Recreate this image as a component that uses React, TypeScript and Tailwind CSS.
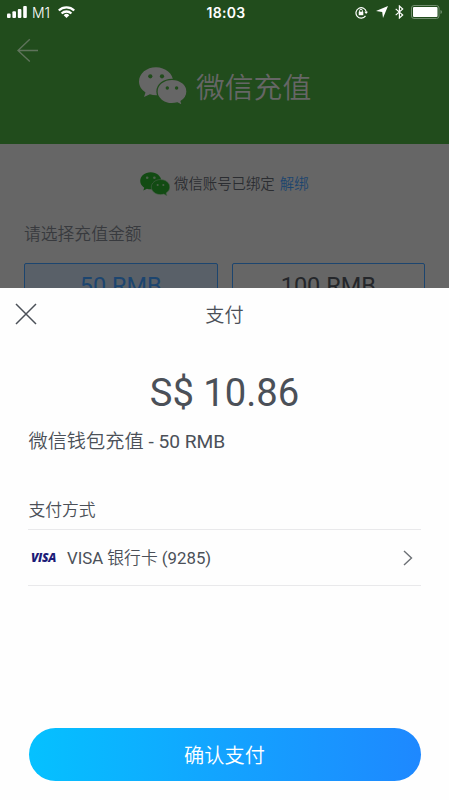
import React from "react";

function WeChatLogo({ className, fill, hole, gap }: { className: string; fill: string; hole: string; gap: number }) {
  return (
    <svg viewBox="0 0 48 39" className={className} fill={fill}>
      <path d="M17 0.3C7.6 0.3 0 6.500 0 14.600c0 4.500 2.500 8.300 6.500 10.900L5 30l5.900-2.700c2 .6 4 .9 6.100 .9 9.500 0 17.200-6 17.200-13.700S26.500 .3 17 .3Z" />
      <path
        d="M33 12.300c-8.300 0-15 5.400-15 12.200s6.700 12.200 15 12.200c1.900 0 3.700-.3 5.400-.8l5 2.600-1.300-4.200c3.600-2.300 5.900-5.800 5.900-9.800 0-6.800-6.700-12.200-15-12.200Z"
        stroke={hole}
        strokeWidth={gap}
      />
      <g fill={hole}>
        <circle cx="11.300" cy="9.300" r="2.100" />
        <circle cx="23" cy="9.300" r="2.100" />
        <circle cx="28.300" cy="21" r="1.700" />
        <circle cx="37.600" cy="21" r="1.700" />
      </g>
    </svg>
  );
}

function StatusBar() {
  return (
    <div className="flex h-6 items-center text-white">
      <svg className="ml-[7px] h-3 w-5" viewBox="0 0 20 12" fill="white">
        <rect x="0" y="7.500" width="3.600" height="4.500" rx="1" />
        <rect x="5.400" y="5.300" width="3.600" height="6.700" rx="1" />
        <rect x="10.800" y="3" width="3.600" height="9" rx="1" />
        <rect x="16.200" y="0" width="3.600" height="12" rx="1" />
      </svg>
      <span className="ml-[5px] w-[20px] pt-px font-[Inter,sans-serif] text-[14px] leading-none font-light tracking-[-0.200px]">M1</span>
      <svg className="ml-[6px] h-3 w-[17px]" viewBox="0 0 17 12" fill="none" stroke="white" strokeWidth="2.300">
        <path d="M.8 4.500a11 11 0 0 1 15.400 0" />
        <path d="M3.600 7.500a7 7 0 0 1 9.800 0" />
        <path d="M8.500 12 5.700 9.200a4 4 0 0 1 5.600 0Z" fill="white" stroke="none" />
      </svg>
      <span className="ml-[128px] w-[46px] pt-px text-center font-[Inter,sans-serif] text-[14px] leading-none font-semibold tracking-[0.300px] whitespace-nowrap">18:03</span>
      <svg className="ml-[106px] h-[13px] w-[13px]" viewBox="0 0 13 13" fill="none" stroke="white" strokeWidth="1.200">
        <path d="M10.500 9.800A5.200 5.200 0 1 1 11.300 6" />
        <path d="M9.300 5.700h3.700l-1.900 2.200Z" fill="white" stroke="none" />
        <rect x="3.700" y="5.700" width="4.600" height="3.500" fill="white" stroke="none" />
        <path d="M4.600 6V4.700a1.400 1.400 0 0 1 2.800 0V6" strokeWidth=".9" />
      </svg>
      <svg className="ml-[8px] h-[12px] w-[12px]" viewBox="0 0 12 12" fill="white">
        <path d="M12 0 7 12 6.200 6 0 5Z" />
      </svg>
      <svg className="ml-[7px] h-[14px] w-[9px]" viewBox="0 0 9 14" fill="none" stroke="white" strokeWidth="1.200">
        <path d="m.7 3.900 7 6.100-3.300 3V1l3.300 3-7 6.100" />
      </svg>
      <svg className="ml-[7px] h-[14px] w-[32px]" viewBox="0 0 32 14" fill="none">
        <rect x=".5" y=".5" width="27.500" height="13" rx="2.500" stroke="#718d6e" />
        <rect x="2" y="2" width="24.500" height="10" rx="1" fill="white" />
        <path d="M29.500 5v4c2-.7 2-3.300 0-4Z" fill="#718d6e" />
      </svg>
    </div>
  );
}

function TopUpPage() {
  return (
    <div className="h-[288px] overflow-hidden bg-[#666]">
      <header className="h-[144px] bg-[#214c1c]">
        <StatusBar />
        <div className="flex h-[43px] pt-[14px] pl-[17px]">
          <svg className="h-6 w-[21px]" viewBox="0 0 21 24" fill="none" stroke="#5f735b" strokeWidth="1.400">
            <path d="M12.800 1.200 1 12.500l11.800 11M1 12.500h20" />
          </svg>
        </div>
        <div className="flex h-[39px] items-center pl-[139px]">
          <WeChatLogo className="h-[39px] w-12 shrink-0" fill="#666" hole="#214c1c" gap={1.3} />
          <h1 className="ml-[9px] pt-[3px] text-[28.800px] leading-[39px] font-[350] whitespace-nowrap text-[#666]">微信充值</h1>
        </div>
      </header>
      <div className="flex h-[79px] items-center pl-[140px] text-[14.400px] font-[350]">
        <WeChatLogo className="h-6 w-[30px] shrink-0" fill="#124b13" hole="#4c604b" gap={1} />
        <span className="ml-[4px] pt-[2px] whitespace-nowrap text-[#2b2d31]">微信账号已绑定</span>
        <a className="ml-[5px] pt-[2px] text-[#1c456f]">解绑</a>
      </div>
      <p className="flex h-[22px] items-center pt-[2px] pl-[24px] text-[16.800px] font-[350] text-[#383a3e]">请选择充值金额</p>
      <div className="mt-[18px] flex gap-[14px] pl-[24px] text-[23.500px] leading-[45px]">
        <div className="h-[60px] w-[193.500px] rounded-[2px] border border-[#1c456f] bg-[#596068] text-center text-[#1c456f]">50 RMB</div>
        <div className="h-[60px] w-[193.500px] rounded-[2px] border border-[#1c456f] text-center text-[#24262a]">100 RMB</div>
      </div>
    </div>
  );
}

function PaymentSheet() {
  return (
    <section className="flex h-[512px] flex-col bg-[#fefefe] text-[#4b5058]">
      <div className="grid h-[52px] grid-cols-3 items-center">
        <svg className="ml-[15px] h-[22px] w-[22px]" viewBox="0 0 22 22" fill="none" stroke="#4b5058" strokeWidth="1.500">
          <path d="m1 1 20 20M21 1 1 21" />
        </svg>
        <h2 className="pt-[3px] text-center text-[19.200px] leading-none font-[350]">支付</h2>
      </div>
      <div className="mt-[31px] flex h-[46px] items-center justify-center text-[38.200px]">S$ 10.86</div>
      <p className="mt-[11px] flex h-[28px] items-center pl-[28.500px] text-[19.200px] font-[350] whitespace-pre">
        微信钱包充值<span className="font-normal"> - 50 RMB</span>
      </p>
      <div className="mx-[28px] mt-[42px]">
        <p className="flex h-[24px] items-center pt-[2px] pl-[0.500px] text-[16.800px] font-[350]">支付方式</p>
        <div className="mt-[7px] flex h-[57px] items-center border-y border-[#e9e9eb]">
          <span className="ml-[3px] w-[26px] font-['Open_Sans'] text-[12px] font-extrabold tracking-[-0.300px] text-[#1c1c78] italic">VISA</span>
          <span className="ml-[10px] pt-[2px] text-[16.800px]">
            VISA <span className="font-[350]">银行卡</span> (9285)
          </span>
          <svg className="mr-[8px] ml-auto h-4 w-[10px]" viewBox="0 0 10 16" fill="none" stroke="#6c7075" strokeWidth="1.400">
            <path d="m1 1 7.500 7L1 15" />
          </svg>
        </div>
      </div>
      <button className="mx-[28.500px] mt-auto mb-[19px] h-[53px] rounded-full bg-linear-to-r from-[#05c1ff] via-[#13a3ff] to-[#1e88ff] pt-[3px] text-[20.200px] font-[350] text-white">
        确认支付
      </button>
    </section>
  );
}

export default function App() {
  return (
    <main className="h-[800px] w-[449px] overflow-hidden font-[Roboto,'Noto_Sans_CJK_SC',sans-serif]">
      <TopUpPage />
      <PaymentSheet />
    </main>
  );
}
